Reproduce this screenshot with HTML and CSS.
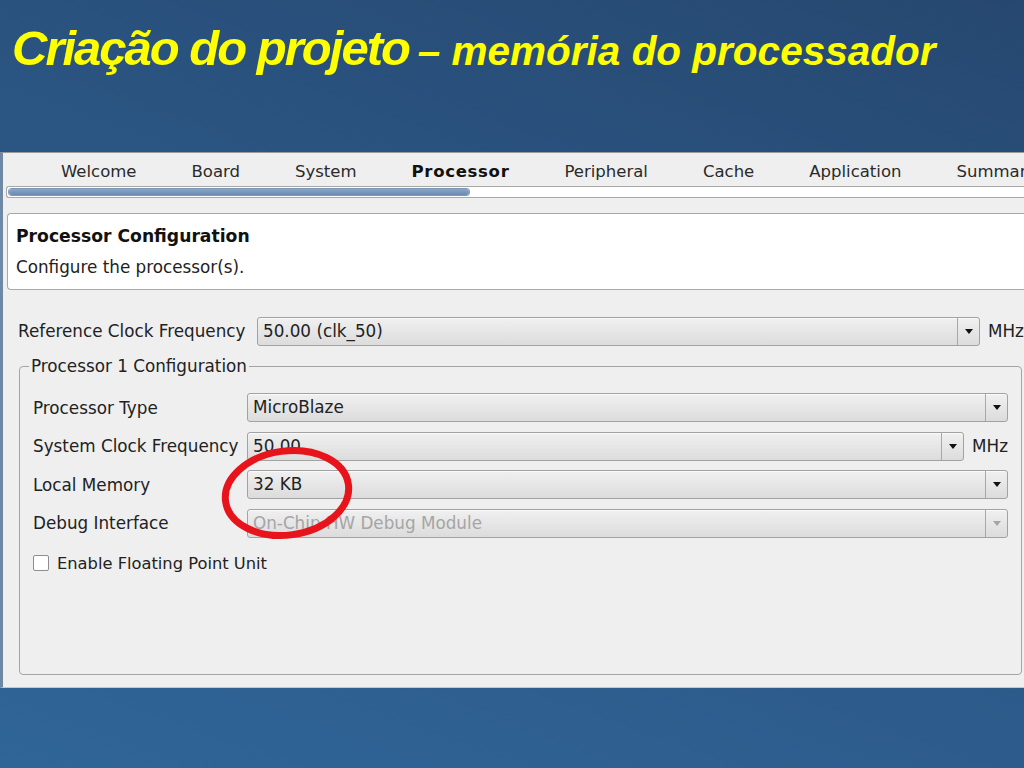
FILE: index.html
```html
<!DOCTYPE html>
<html lang="pt">
<head>
<meta charset="utf-8">
<title>Criação do projeto – memória do processador</title>
<link rel="stylesheet" href="styles.css">
</head>
<body>
<div class="slide">
  <h1 class="title"><span class="big">Criação do projeto</span> <span class="small">– memória do processador</span></h1>

  <div class="window">
    <div class="tabs">
      <span>Welcome</span>
      <span>Board</span>
      <span>System</span>
      <span class="active">Processor</span>
      <span>Peripheral</span>
      <span>Cache</span>
      <span>Application</span>
      <span>Summary</span>
    </div>
    <div class="progress"><div class="fill"></div></div>

    <div class="header">
      <div class="h-title">Processor Configuration</div>
      <div class="h-sub">Configure the processor(s).</div>
    </div>

    <div class="refrow">
      <span class="label">Reference Clock Frequency</span>
      <div class="combo wide"><span class="val">50.00 (clk_50)</span><span class="btn"><i class="tri"></i></span></div>
      <span class="unit">MHz</span>
    </div>

    <fieldset class="group">
      <legend>Processor 1 Configuration</legend>
      <div class="row">
        <span class="label">Processor Type</span>
        <div class="combo"><span class="val">MicroBlaze</span><span class="btn"><i class="tri"></i></span></div>
      </div>
      <div class="row">
        <span class="label">System Clock Frequency</span>
        <div class="combo"><span class="val">50.00</span><span class="btn"><i class="tri"></i></span></div>
        <span class="unit">MHz</span>
      </div>
      <div class="row">
        <span class="label">Local Memory</span>
        <div class="combo"><span class="val">32 KB</span><span class="btn"><i class="tri"></i></span></div>
      </div>
      <div class="row">
        <span class="label">Debug Interface</span>
        <div class="combo disabled"><span class="val">On-Chip HW Debug Module</span><span class="btn"><i class="tri"></i></span></div>
      </div>
      <label class="check"><span class="box"></span>Enable Floating Point Unit</label>
    </fieldset>
  </div>

  <svg class="ring" width="150" height="110" viewBox="0 0 150 110" aria-hidden="true">
    <ellipse cx="75" cy="55" rx="62" ry="42" fill="none" stroke="#e8141b" stroke-width="7" transform="rotate(-8 75 55)"/>
  </svg>
</div>
</body>
</html>
```

FILE: styles.css
```css
html, body {
  margin: 0;
  padding: 0;
  width: 1024px;
  height: 768px;
  overflow: hidden;
}

.slide {
  position: relative;
  width: 1024px;
  height: 768px;
  background: linear-gradient(200deg, #264870 0%, #2b5684 45%, #306598 100%);
  overflow: hidden;
}

.title {
  margin: 0;
  padding: 23px 0 0 12px;
  height: 128px;
  box-sizing: border-box;
  font-family: "Liberation Sans", Arial, sans-serif;
  font-style: italic;
  font-weight: bold;
  color: #ffff00;
  white-space: nowrap;
  line-height: 50px;
}
.title .big { font-size: 49px; letter-spacing: -2px; }
.title .small { font-size: 40.5px; letter-spacing: 0; }

.window {
  margin-top: 24px;
  height: 536px;
  box-sizing: border-box;
  background: #efefef;
  border-top: 1px solid #9a9a9a;
  border-left: 3px solid #6f88a6;
  border-bottom: 1px solid #c8c8c8;
  padding-left: 4px;
  font-family: "DejaVu Sans", "Bitstream Vera Sans", sans-serif;
  font-size: 16.8px;
  color: #222222;
}

.tabs {
  display: flex;
  gap: 55px;
  padding: 3px 0 0 54px;
  height: 33px;
  box-sizing: border-box;
  align-items: center;
  white-space: nowrap;
  color: #2a2a2a;
  font-size: 16.5px;
}
.tabs .active { font-weight: bold; color: #111; letter-spacing: 0.7px; }

.progress {
  height: 6px;
  margin-right: -6px;
  border: 1px solid #a8a8a8;
  border-right: none;
  border-radius: 3px 0 0 3px;
  background: #ffffff;
  padding: 2px;
  margin-left: -1px;
}
.progress .fill {
  width: 460px;
  height: 6px;
  border-radius: 3px;
  background: linear-gradient(#8aa6c8, #6a8ab2);
  box-shadow: 0 0 0 1px #7d97b8;
}

.header {
  margin-top: 15px;
  margin-right: -6px;
  height: 77px;
  box-sizing: border-box;
  background: #ffffff;
  border: 1px solid #a9a9a9;
  border-right: none;
  border-radius: 4px 0 0 4px;
  padding: 10px 0 0 8px;
}
.h-title { font-weight: bold; color: #111; line-height: 24px; font-size: 17.2px; }
.h-sub { margin-top: 8px; line-height: 22px; }

.refrow {
  display: flex;
  align-items: center;
  margin-top: 26px;
  padding-left: 11px;
  height: 30px;
}
.refrow .label { width: 239px; white-space: nowrap; }
.refrow .combo.wide { width: 723px; flex: none; }
.unit { margin-left: 8px; white-space: nowrap; }

.combo {
  display: flex;
  align-items: stretch;
  height: 29px;
  box-sizing: border-box;
  border: 1px solid #a2a2a2;
  border-radius: 3px;
  background: linear-gradient(#f0f0f0, #dcdcdc);
  box-shadow: inset 0 1px 0 #fafafa;
}
.combo .val {
  flex: 1;
  padding-left: 5px;
  line-height: 26px;
  white-space: nowrap;
  overflow: hidden;
}
.combo .btn {
  width: 21px;
  border-left: 1px solid #a8a8a8;
  display: flex;
  align-items: center;
  justify-content: center;
}
.tri {
  width: 0;
  height: 0;
  border-left: 4px solid transparent;
  border-right: 4px solid transparent;
  border-top: 5px solid #111;
}
.combo.disabled .val { color: #a5a5a5; }
.combo.disabled .tri { border-top-color: #a5a5a5; }

.group {
  margin: 10px 0 0 12px;
  width: 1003px;
  height: 319px;
  box-sizing: border-box;
  border: 1px solid #a4a4a4;
  border-radius: 4px;
  padding: 17px 13px 0 13px;
  min-width: 0;
}
.group legend {
  padding: 0 2px;
  margin-left: -4px;
  white-space: nowrap;
}

.row {
  display: flex;
  align-items: center;
  height: 29px;
  margin-bottom: 9.5px;
}
.row .label { width: 214px; flex: none; white-space: nowrap; }
.row .combo { flex: 1; }
.row .unit { margin-left: 8px; }

.check {
  display: flex;
  align-items: center;
  margin-top: 16px;
  white-space: nowrap;
  font-size: 16.3px;
}
.check .box {
  width: 14px;
  height: 14px;
  border: 1px solid #8e8e8e;
  border-radius: 2px;
  background: #ffffff;
  margin-right: 8px;
}

.ring {
  position: absolute;
  left: 212px;
  top: 438px;
}
```
